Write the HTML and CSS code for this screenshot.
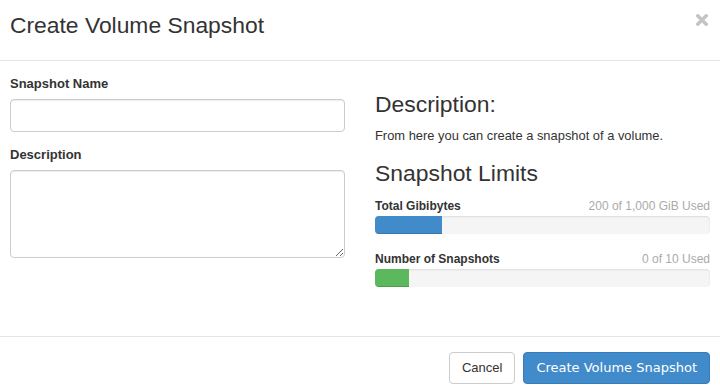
FILE: index.html
```html
<!DOCTYPE html>
<html>
<head>
<meta charset="utf-8">
<link rel="stylesheet" href="styles.css">
</head>
<body>
<div class="modal">
  <div class="modal-header">
    <h4 class="modal-title">Create Volume Snapshot</h4>
    <button class="close" type="button" aria-label="Close">
      <svg width="12" height="12" viewBox="0 0 12 12"><path d="M1.8 1.8 L10.2 10.2 M10.2 1.8 L1.8 10.2" stroke="#c4c4c4" stroke-width="3.4" stroke-linecap="square"/></svg>
    </button>
  </div>
  <div class="modal-body">
    <div class="col-left">
      <div class="form-group">
        <label class="control-label">Snapshot Name</label>
        <input class="form-control" type="text">
      </div>
      <div class="form-group">
        <label class="control-label">Description</label>
        <textarea class="form-control textarea"></textarea>
      </div>
    </div>
    <div class="col-right">
      <h3 class="heading">Description:</h3>
      <p class="help">From here you can create a snapshot of a volume.</p>
      <h3 class="heading limits">Snapshot Limits</h3>
      <div class="quota">
        <div class="quota-row"><strong>Total Gibibytes</strong><span class="quota-used">200 of 1,000 GiB Used</span></div>
        <div class="progress"><div class="bar bar-blue" style="width:20%"></div></div>
      </div>
      <div class="quota">
        <div class="quota-row"><strong>Number of Snapshots</strong><span class="quota-used">0 of 10 Used</span></div>
        <div class="progress"><div class="bar bar-green" style="width:10%"></div></div>
      </div>
    </div>
  </div>
  <div class="modal-footer">
    <button class="btn btn-default" type="button">Cancel</button>
    <button class="btn btn-primary" type="button">Create Volume Snapshot</button>
  </div>
</div>
</body>
</html>
```
FILE: styles.css
```css
* { box-sizing: border-box; }
html, body { margin: 0; padding: 0; background: #fff; }
body {
  font-family: "Liberation Sans", Arial, sans-serif;
  color: #333;
  font-size: 13px;
  width: 720px;
  height: 392px;
  overflow: hidden;
}
.modal-header {
  height: 61px;
  padding: 11px 12px 0 10px;
  display: flex;
  justify-content: space-between;
  align-items: flex-start;
  border-bottom: 1px solid #e5e5e5;
}
.modal-title {
  margin: 0;
  font-size: 22.85px;
  font-weight: normal;
  line-height: 28px;
  color: #333;
}
.close {
  margin-top: 3px;
  padding: 0;
  border: 0;
  background: transparent;
  width: 12px;
  height: 12px;
  display: block;
}
.close svg { display: block; }
.modal-body {
  height: 275px;
  padding: 14px 10px 0 10px;
  display: grid;
  grid-template-columns: 1fr 1fr;
  column-gap: 30px;
  align-items: start;
}
.form-group { margin-bottom: 14px; }
.control-label {
  display: block;
  font-weight: bold;
  font-size: 13px;
  line-height: 18px;
  margin-bottom: 6px;
}
.form-control {
  display: block;
  width: 100%;
  height: 33px;
  border: 1px solid #ccc;
  border-radius: 4px;
  box-shadow: inset 0 1px 1px rgba(0,0,0,.075);
  background: #fff;
  font-family: "Liberation Sans", Arial, sans-serif;
  font-size: 13px;
  padding: 6px 10px;
  margin: 0;
}
.textarea { height: 88px; resize: vertical; }
.heading {
  margin: 15px 0 0 0;
  font-size: 22.9px;
  font-weight: normal;
  line-height: 28px;
}
.help {
  margin: 9px 0 0 0;
  font-size: 12.9px;
  line-height: 18px;
}
.limits { margin-top: 14px; }
.quota { margin-top: 11px; }
.quota + .quota { margin-top: 17px; }
.quota-row {
  display: flex;
  justify-content: space-between;
  font-size: 12px;
  line-height: 17px;
}
.quota-row strong { font-weight: bold; color: #333; }
.quota-used { color: #aaa; }
.progress {
  margin-top: 1px;
  height: 18px;
  background: #f5f5f5;
  border-radius: 4px;
  box-shadow: inset 0 1px 2px rgba(0,0,0,.1);
  overflow: hidden;
}
.bar {
  height: 100%;
  box-shadow: inset 0 -1px 0 rgba(0,0,0,.15);
}
.bar-blue { background: #428bca; }
.bar-green { background: #5cb85c; }
.modal-footer {
  border-top: 1px solid #e5e5e5;
  padding: 15px 10px;
  display: flex;
  justify-content: flex-end;
  gap: 8px;
}
.btn {
  height: 32px;
  border-radius: 4px;
  font-size: 13px;
  margin: 0;
  line-height: 30px;
  padding: 0 12px;
}
.btn-default {
  background: #fff;
  border: 1px solid #ccc;
  color: #333;
  font-family: "Liberation Sans", Arial, sans-serif;
}
.btn-primary {
  background: #428bca;
  border: 1px solid #357ebd;
  color: #fff;
  font-family: "DejaVu Sans", sans-serif;
  padding: 0 12px;
}
```
